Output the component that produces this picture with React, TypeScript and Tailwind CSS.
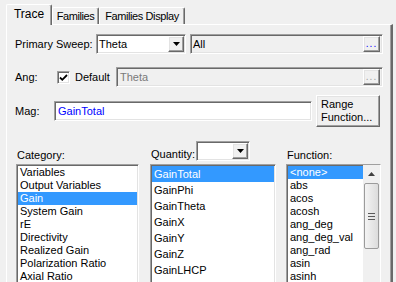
import React from 'react';

// classic win32 bevels
const sunken =
  'border border-t-[#a0a0a0] border-l-[#a0a0a0] border-b-white border-r-white shadow-[inset_1px_1px_0_#696969,inset_-1px_-1px_0_#e3e3e3]';
const raised =
  'border border-t-white border-l-white border-b-[#696969] border-r-[#696969] shadow-[inset_-1px_-1px_0_#a0a0a0,inset_1px_1px_0_#e3e3e3]';

function DropArrow({ color = '#000' }: { color?: string }) {
  return (
    <svg width="7" height="4" viewBox="0 0 7 4">
      <path d="M0 0h7L3.5 4z" fill={color} />
    </svg>
  );
}

function DotsButton({ disabled }: { disabled?: boolean }) {
  return (
    <div
      className={`${raised} w-[17px] h-[16px] bg-[#f0f0f0] flex items-end justify-center pb-[3px] text-[10px] leading-[8px] tracking-[1px] ${
        disabled ? 'text-[#a0a0a0]' : 'text-[#0000ff]'
      }`}
    >
      ...
    </div>
  );
}

function Combo({ value, width }: { value: string; width: string }) {
  return (
    <div className={`${sunken} ${width} h-[20px] bg-white flex items-center pl-[2px] pr-[1px]`}>
      <span className="flex-1">{value}</span>
      <div className={`${raised} w-[16px] h-[16px] bg-[#f0f0f0] flex items-center justify-center`}>
        <DropArrow />
      </div>
    </div>
  );
}

function Tab({ label, width, active }: { label: string; width: string; active?: boolean }) {
  return (
    <div
      className={`${width} border-t border-l border-r border-t-white border-l-white border-r-[#696969] shadow-[inset_-1px_0_0_#a0a0a0] rounded-t-[2px] bg-[#f0f0f0] flex items-center justify-center whitespace-nowrap ${
        active ? 'h-[21px] -mb-[1px] relative z-10 text-[12px] pb-[2px]' : 'h-[17px] text-[11px] tracking-[-0.4px]'
      }`}
    >
      {label}
    </div>
  );
}

const categories = [
  'Variables',
  'Output Variables',
  'Gain',
  'System Gain',
  'rE',
  'Directivity',
  'Realized Gain',
  'Polarization Ratio',
  'Axial Ratio',
];
const quantities = ['GainTotal', 'GainPhi', 'GainTheta', 'GainX', 'GainY', 'GainZ', 'GainLHCP'];
const functions = ['<none>', 'abs', 'acos', 'acosh', 'ang_deg', 'ang_deg_val', 'ang_rad', 'asin', 'asinh'];

export default function App() {
  return (
    <div
      className="w-[396px] h-[282px] overflow-hidden bg-[#f0f0f0] text-[11px] leading-[13px] text-black"
      style={{ fontFamily: '"Liberation Sans", Arial, sans-serif' }}
    >
      <div className="flex items-end h-[24px] pl-[6px]">
        <Tab label="Trace" width="w-[46px]" active />
        <Tab label="Families" width="w-[47px]" />
        <Tab label="Families Display" width="w-[86px]" />
      </div>

      <div className="ml-[6px] w-[387px] h-[300px] border-t border-l border-t-white border-l-white border-r-2 border-r-[#696969] shadow-[inset_-1px_0_0_#a0a0a0]">
        {/* primary sweep */}
        <div className="mt-[9px] flex items-center h-[20px] pl-[8px] pr-[8px]">
          <span className="w-[81px]">Primary Sweep:</span>
          <Combo value="Theta" width="w-[90px]" />
          <div className={`${sunken} ml-auto w-[193px] h-[20px] flex items-center pl-[2px] pr-[2px]`}>
            <span className="flex-1">All</span>
            <DotsButton />
          </div>
        </div>

        {/* ang */}
        <div className="mt-[13px] flex items-center h-[20px] pl-[8px] pr-[8px]">
          <span className="w-[42px]">Ang:</span>
          <div className={`${sunken} w-[13px] h-[13px] bg-white flex items-center justify-center`}>
            <svg width="9" height="9" viewBox="0 0 9 9">
              <path d="M1 4.5l2.3 2.3L8 2" stroke="#000" strokeWidth="1.8" fill="none" />
            </svg>
          </div>
          <span className="ml-[5px]">Default</span>
          <div className={`${sunken} ml-auto w-[267px] h-[20px] flex items-center pl-[3px] pr-[2px]`}>
            <span className="flex-1 text-[#7a7a7a]">Theta</span>
            <DotsButton disabled />
          </div>
        </div>

        {/* mag */}
        <div className="mt-[8px] flex items-center h-[32px] pl-[8px] pr-[8px]">
          <span className="w-[39px]">Mag:</span>
          <div className={`${sunken} w-[258px] h-[20px] bg-white flex items-center pl-[3px] text-[#0000ff]`}>
            GainTotal
          </div>
          <div className={`${raised} ml-auto mr-[3px] w-[64px] h-[32px] flex flex-col justify-center pl-[4px]`}>
            <span>Range</span>
            <span>Function...</span>
          </div>
        </div>

        {/* list headers */}
        <div className="mt-[14px] flex items-end h-[23px] pl-[9px]">
          <div className="w-[123px] pl-[1px] pb-[2px]">Category:</div>
          <div className="ml-[11px] w-[126px] flex items-end pb-[3px]">
            <span className="pl-[1px]">Quantity:</span>
            <Combo value="" width="w-[54px] ml-[1px]" />
          </div>
          <div className="ml-[10px] w-[95px] pl-[1px] pb-[2px]">Function:</div>
        </div>

        {/* lists */}
        <div className="flex pl-[9px]">
          <div className={`${sunken} w-[123px] h-[130px] bg-white pt-[1px] px-[1px]`}>
            {categories.map((c) => (
              <div
                key={c}
                className={`h-[13px] pl-[2px] whitespace-nowrap ${c === 'Gain' ? 'bg-[#3399ff] text-white' : ''}`}
              >
                {c}
              </div>
            ))}
          </div>
          <div className={`${sunken} ml-[11px] w-[126px] h-[130px] bg-white pt-[1px] px-[1px]`}>
            {quantities.map((q, i) => (
              <div
                key={q}
                className={`h-[16px] leading-[16px] pl-[2px] ${i === 0 ? 'bg-[#3399ff] text-white' : ''}`}
              >
                {q}
              </div>
            ))}
          </div>
          <div className={`${sunken} ml-[10px] w-[95px] h-[130px] bg-white flex`}>
            <div className="flex-1 pt-[1px] pl-[1px]">
              {functions.map((f, i) => (
                <div
                  key={f}
                  className={`h-[13px] pl-[2px] whitespace-nowrap ${i === 0 ? 'bg-[#3399ff] text-white' : ''}`}
                >
                  {f}
                </div>
              ))}
            </div>
            <div className="w-[17px] bg-[#f0f0f0] flex flex-col items-center">
              <div className="h-[17px] w-full flex items-center justify-center">
                <svg width="7" height="4" viewBox="0 0 7 4">
                  <path d="M0 4h7L3.5 0z" fill="#404040" />
                </svg>
              </div>
              <div className="mt-[1px] w-[15px] h-[66px] rounded-[2px] border border-[#9b9b9b] bg-gradient-to-r from-[#f4f4f4] to-[#dcdcdc] flex flex-col items-center justify-center gap-[2px]">
                <div className="w-[7px] h-[1px] bg-[#5a5a5a]" />
                <div className="w-[7px] h-[1px] bg-[#5a5a5a]" />
                <div className="w-[7px] h-[1px] bg-[#5a5a5a]" />
              </div>
            </div>
          </div>
        </div>
      </div>
    </div>
  );
}
